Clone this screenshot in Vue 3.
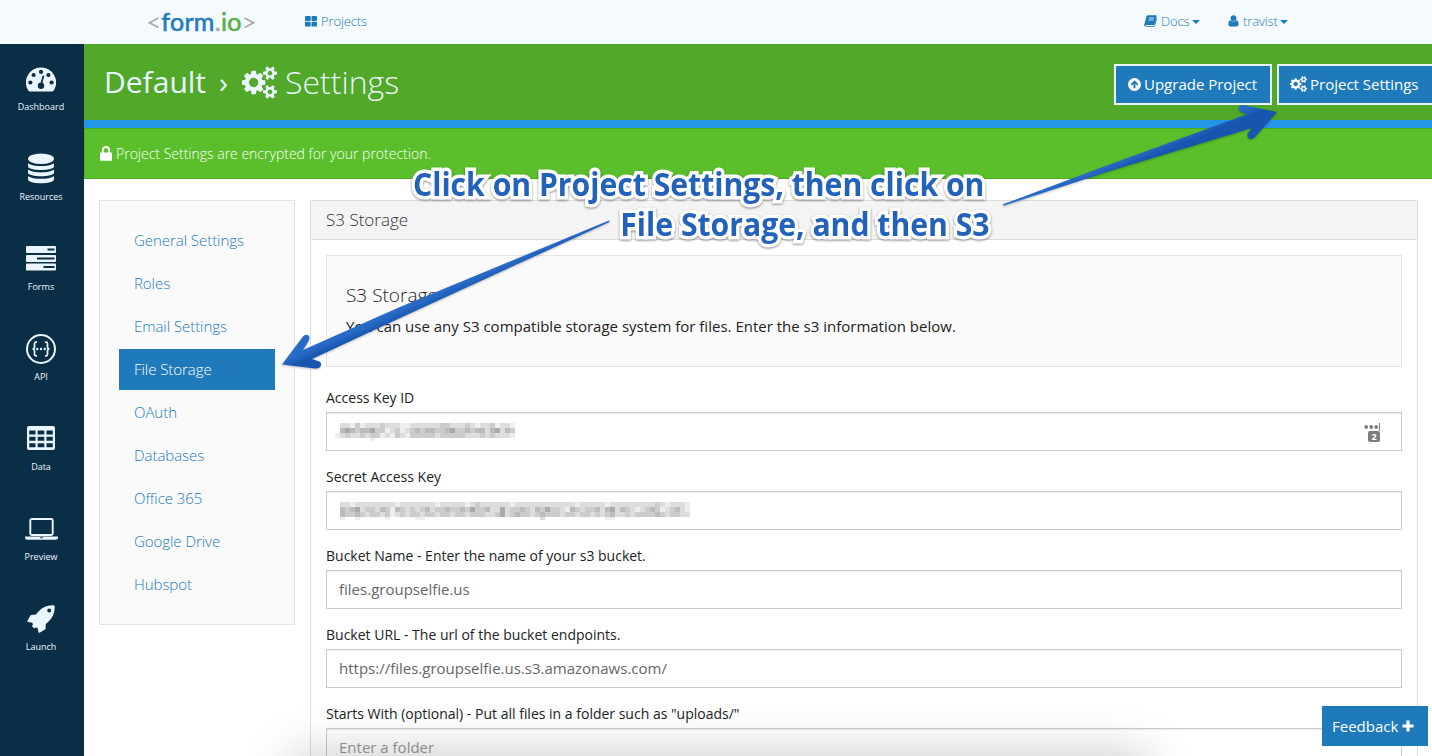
<script setup>
const sideItems = ['Dashboard', 'Resources', 'Forms', 'API', 'Data', 'Preview', 'Launch']
const menu = ['General Settings', 'Roles', 'Email Settings', 'File Storage', 'OAuth', 'Databases', 'Office 365', 'Google Drive', 'Hubspot']

const cogs = 'M896 896q0-106-75-181t-181-75-181 75-75 181 75 181 181 75 181-75 75-181zm768 512q0-52-38-90t-90-38-90 38-38 90q0 53 37.5 90.5t90.5 37.5 90.5-37.5 37.5-90.5zm0-1024q0-52-38-90t-90-38-90 38-38 90q0 53 37.5 90.5t90.5 37.5 90.5-37.5 37.5-90.5zm-384 421v185q0 10-7 19.5t-16 10.5l-155 24q-11 35-32 76 34 48 90 115 7 11 7 20 0 12-7 19-23 30-82.5 89.5t-78.5 59.5q-11 0-21-7l-115-90q-37 19-77 31-11 108-23 155-7 24-30 24h-186q-11 0-20-7.5t-10-17.5l-23-153q-34-10-75-31l-118 89q-7 7-20 7-11 0-21-8-144-133-144-160 0-9 7-19 10-14 41-53t47-61q-23-44-35-82l-152-24q-10-1-17-9.5t-7-19.5v-185q0-10 7-19.5t16-10.5l155-24q11-35 32-76-34-48-90-115-7-11-7-20 0-12 7-20 22-30 82-89t79-59q11 0 21 7l115 90q34-18 77-32 11-108 23-154 7-24 30-24h186q11 0 20 7.5t10 17.5l23 153q34 10 75 31l118-89q8-7 20-7 11 0 21 8 144 133 144 160 0 8-7 19-12 16-42 54t-45 60q23 48 34 82l152 23q10 2 17 10.5t7 19.5zm640 533v140q0 16-149 31-12 27-30 52 51 113 51 138 0 4-4 7-122 71-124 71-8 0-46-47t-52-68q-20 2-30 2t-30-2q-14 21-52 68t-46 47q-2 0-124-71-4-3-4-7 0-25 51-138-18-25-30-52-149-15-149-31v-140q0-16 149-31 13-29 30-52-51-113-51-138 0-4 4-7 4-2 35-20t59-34 30-16q8 0 46 46.5t52 67.5q20-2 30-2t30 2q51-71 92-112l6-2q4 0 124 70 4 3 4 7 0 25-51 138 17 23 30 52 149 15 149 31zm0-1024v140q0 16-149 31-12 27-30 52 51 113 51 138 0 4-4 7-122 71-124 71-8 0-46-47t-52-68q-20 2-30 2t-30-2q-14 21-52 68t-46 47q-2 0-124-71-4-3-4-7 0-25 51-138-18-25-30-52-149-15-149-31v-140q0-16 149-31 13-29 30-52-51-113-51-138 0-4 4-7 4-2 35-20t59-34 30-16q8 0 46 46.5t52 67.5q20-2 30-2t30 2q51-71 92-112l6-2q4 0 124 70 4 3 4 7 0 25-51 138 17 23 30 52 149 15 149 31z'

// Each hex digit is the gray level of one 5px mosaic cell.
const maskedId = [
  'fddecedddcdddeeddddddccdddcdeddcedde',
  'fbabcbbaccedcedcbcbbccbaccbcbbdbadbc',
  'edcddcdccedecdecccccdcccccdddcdcddde',
  'fffffffeffffffffffffffffffffffffffff',
]
const maskedSecret = [
  'fddeddddddddedddddddedddddedcddddddeddddddddddddedddddedddddddddcdeddde',
  'fbcbadccdbcebcdcdcbdccbccbcaccbddadccbcdbcaccdebcdccbdbadbcdedcbcedcbde',
  'fbccbcdccdcedcdccdccdccdccdcccddcadcbccdcbcccdccdccdcdcbddcdccccbcdccdd',
  'feffefffffefffffeefffffffffffffffffffffffdffffffffffffeeffffffffffffffff',
]
const cells = rows => rows.flatMap((r, y) => [...r].map((c, x) => ({ x: x * 5, y: y * 5, c: '#' + c + c + c })).filter(v => v.c !== '#fff'))

const fields = [
  { label: 'Access Key ID', mask: cells(maskedId), manager: true },
  { label: 'Secret Access Key', mask: cells(maskedSecret) },
  { label: 'Bucket Name - Enter the name of your s3 bucket.', value: 'files.groupselfie.us' },
  { label: 'Bucket URL - The url of the bucket endpoints.', value: 'https://files.groupselfie.us.s3.amazonaws.com/' },
  { label: 'Starts With (optional) - Put all files in a folder such as "uploads/"', value: 'Enter a folder', hint: true },
]
</script>

<template>
  <div class="page">
    <header class="topbar">
      <div class="logo">
        <svg width="11" height="12" viewBox="0 0 11 12"><path d="M10.500 1 1.500 5.700 10.500 10.500" /></svg>
        <span class="word"><span class="form">form</span><span class="dot">.</span><span class="io">io</span></span>
        <svg width="11" height="12" viewBox="0 0 11 12"><path d="M.5 1 9.500 5.700 .5 10.500" /></svg>
      </div>
      <a class="nav projects">
        <svg width="12" height="11" viewBox="0 0 12 11"><path fill="currentColor" d="M1 0h4q.7 0 .7.8v3.400q0 .8-.7.8H1q-1 0-1-.8V.8Q0 0 1 0Zm6.400 0H11q1 0 1 .8v3.400q0 .8-1 .8H7.400q-.9 0-.9-.8V.8q0-.8.9-.8ZM1 5.800h4q.7 0 .7.8v3.100q0 .9-.7.9H1q-1 0-1-.9V6.600q0-.8 1-.8Zm6.400 0H11q1 0 1 .8v3.100q0 .9-1 .9H7.400q-.9 0-.9-.9V6.600q0-.8.9-.8Z" /></svg>
        <span>Projects</span>
      </a>
      <a class="nav docs">
        <svg width="13" height="12" viewBox="0 0 13 12"><path fill="currentColor" d="M4 .3h7.600c.7 0 1.200.5 1 1.200L10.400 9c-.2.7-.8 1.100-1.500 1.100H2.200c-.5 0-.8.2-.7.5.1.3.4.3.9.3h6.700c.5 0 .8-.2 1-.7L12.300 3c.6.3.8.8.6 1.400l-2 6c-.3.9-1 1.400-1.800 1.400H2C.8 11.800 0 10.900.2 9.700L2.500 1.500C2.700.7 3.200.3 4 .3Z" /><path d="M5 3h5M4.500 5h5" stroke="#d5eaf7" stroke-width=".9" /></svg>
        <span>Docs</span><i class="caret"></i>
      </a>
      <a class="nav user">
        <svg width="11" height="12" viewBox="0 0 11 12"><circle cx="5.500" cy="3.200" r="2.900" fill="currentColor" /><path fill="currentColor" d="M2.500 5.200C.9 5.700.4 7.200.4 9.200c0 1.500.9 2.200 2.100 2.200h6c1.200 0 2.100-.7 2.100-2.200 0-2-.5-3.500-2.100-4-1.700 1.700-4.300 1.700-6 0Z" /></svg>
        <span>travist</span><i class="caret"></i>
      </a>
    </header>

    <div class="body">
      <aside class="sidebar">
        <a v-for="item in sideItems" :key="item" class="side-item">
          <span class="side-icon" :class="item.toLowerCase()">
            <svg v-if="item === 'Dashboard'" width="30" height="26" viewBox="0 0 30 26"><path fill="currentColor" d="M15 .5a15 15 0 0 0-12.700 23q.5.900 1.500.900h22.400q1 0 1.500-.900A15 15 0 0 0 15 .5Z" /><g fill="#0b2e47"><circle cx="4.400" cy="15.500" r="2.100" /><circle cx="7.600" cy="8" r="2.100" /><circle cx="15" cy="4.900" r="2.100" /><circle cx="22.400" cy="8" r="2.100" /><circle cx="25.600" cy="15.500" r="2.100" /><circle cx="15" cy="18.800" r="3.200" /></g><path d="m15.200 17.500 2.100-8.200" stroke="#0b2e47" stroke-width="1.700" stroke-linecap="round" /></svg>
            <svg v-else-if="item === 'Resources'" width="26" height="31" viewBox="0 0 26 31"><ellipse cx="13" cy="5.800" rx="13" ry="5.300" fill="currentColor" /><g fill="currentColor"><path d="M0 10.200C5 14 21 14 26 10.200v3c0 5-26 5-26 0Z" /><path d="M0 16.600c5 3.800 21 3.800 26 0v3c0 5-26 5-26 0Z" /><path d="M0 23c5 3.800 21 3.800 26 0v3.200c0 5.500-26 5.500-26 0Z" /></g></svg>
            <svg v-else-if="item === 'Forms'" width="30" height="25" viewBox="0 0 30 25"><g fill="currentColor"><rect width="30" height="7" rx="1" /><rect y="9" width="30" height="7" rx="1" /><rect y="17.500" width="30" height="7" rx="1" /></g><g fill="#0b2e47"><rect x="21.500" y="2.500" width="7" height="2" /><rect x="11" y="11.500" width="17.500" height="2" /><rect x="17.500" y="20" width="11" height="2" /></g></svg>
            <svg v-else-if="item === 'API'" class="line" width="30" height="30" viewBox="0 0 30 30"><circle cx="15" cy="15" r="14" stroke-width="2" /><path stroke-width="1.700" d="M11 8.200H10q-1.500 0-1.500 1.500v3q0 2.300-2 2.300 2 0 2 2.300v3q0 1.500 1.500 1.500h1M19 8.200h1q1.500 0 1.500 1.500v3q0 2.300 2 2.300-2 0-2 2.300v3q0 1.500-1.500 1.500h-1" /><g fill="currentColor" stroke="none"><circle cx="11.200" cy="15" r="1.200" /><circle cx="15" cy="15" r="1.200" /><circle cx="18.800" cy="15" r="1.200" /></g></svg>
            <svg v-else-if="item === 'Data'" width="28" height="24" viewBox="0 0 28 24"><path fill="currentColor" fill-rule="evenodd" d="M2 0h24q2 0 2 2v20q0 2-2 2H2q-2 0-2-2V2Q0 0 2 0Zm.200 4.500v4h6.300v-4Zm8.500 0v4h6.600v-4Zm8.800 0v4h6.300v-4ZM2.200 10.800v4h6.300v-4Zm8.500 0v4h6.600v-4Zm8.800 0v4h6.300v-4ZM2.200 17.200v4h6.300v-4Zm8.500 0v4h6.600v-4Zm8.800 0v4h6.300v-4Z" /></svg>
            <svg v-else-if="item === 'Preview'" width="33" height="22" viewBox="0 0 33 22"><rect x="5.300" y="1" width="22.400" height="16" rx="1.500" fill="none" stroke="currentColor" stroke-width="1.900" /><path fill="currentColor" d="M0 18.600h33v1.200q0 2-2.500 2h-28Q0 21.800 0 19.800Z" /><path d="M15 19.700h3" stroke="#0b2e47" stroke-width=".8" /></svg>
            <svg v-else width="28" height="28" viewBox="0 0 28 28"><path fill="currentColor" fill-rule="evenodd" d="M27 .4C19-.2 13.500 3.500 9 9.500L4.200 9.900q-.5.100-.8.500L.3 15.900q-.2.900.7 1l4.400.8.500 2-1 1.300 2.400 2.400 1.300-1 2 .5.900 4.400q.2.900 1 .5l5.500-3.200q.4-.3.500-.8l.3-4.800C24.800 14.500 28 9 27.600 1q0-.5-.6-.6Zm-4.800 3.100a2 2 0 1 1 0 4 2 2 0 0 1 0-4Z" /></svg>
          </span>
          <span class="side-label">{{ item }}</span>
        </a>
      </aside>

      <main class="main">
        <div class="titlebar">
          <h1><span class="project">Default</span><span class="sep">›</span><svg width="35" height="33" viewBox="0 0 1920 1792"><path fill="currentColor" :d="cogs" /></svg><span class="section">Settings</span></h1>
          <div class="actions">
            <a class="btn upgrade"><svg width="13" height="13" viewBox="0 0 13 13"><path fill="currentColor" fill-rule="evenodd" d="M6.500 0a6.500 6.500 0 1 1 0 13 6.500 6.500 0 0 1 0-13Zm0 2.200L2.500 6.200l1.300 1.300L5.500 5.800v4.500h2V5.800l1.700 1.700 1.300-1.300Z" /></svg><span>Upgrade Project</span></a>
            <a class="btn settings"><svg width="17" height="16" viewBox="0 0 1920 1792"><path fill="currentColor" :d="cogs" /></svg><span>Project Settings</span></a>
          </div>
        </div>
        <div class="alert">
          <svg width="12" height="15" viewBox="0 0 12 15"><path d="M2.800 7V4.300a3.200 3.200 0 0 1 6.400 0V7" fill="none" stroke="#fff" stroke-width="2" /><rect y="6.500" width="12" height="8.200" rx=".8" fill="#fff" /></svg>
          <span>Project Settings are encrypted for your protection.</span>
        </div>

        <div class="content">
          <nav class="menu">
            <a v-for="m in menu" :key="m" :class="{ active: m === 'File Storage' }"><span>{{ m }}</span></a>
          </nav>
          <section class="panel">
            <div class="panel-head"><span>S3 Storage</span></div>
            <div class="panel-body">
              <div class="well">
                <h2>S3 Storage</h2>
                <p>You can use any S3 compatible storage system for files. Enter the s3 information below.</p>
              </div>
              <div v-for="f in fields" :key="f.label" class="field">
                <label>{{ f.label }}</label>
                <div class="input" :class="{ hint: f.hint, masked: f.mask }">
                  <svg v-if="f.mask" class="mosaic" width="360" height="20" shape-rendering="crispEdges"><rect v-for="(c, i) in f.mask" :key="i" :x="c.x" :y="c.y" width="5" :height="c.y === 15 ? 3 : 5" :fill="c.c" /></svg>
                  <span v-else>{{ f.value }}</span>
                  <span v-if="f.manager" class="manager">
                    <svg width="17" height="8" viewBox="0 0 17 8"><g fill="#7d7d7d"><circle cx="2.200" cy="4" r="1.900" /><circle cx="7.200" cy="4" r="1.900" /><circle cx="12.200" cy="4" r="1.900" /><rect x="15" width="1" height="8" /></g></svg>
                    <b>2</b>
                  </span>
                </div>
              </div>
            </div>
          </section>
        </div>
      </main>
    </div>

    <div class="dock-shadow"></div>
    <svg class="arrows" width="1432" height="756" viewBox="0 0 1432 756">
      <defs>
        <linearGradient id="g1" gradientUnits="userSpaceOnUse" x1="440" y1="287" x2="447" y2="303"><stop offset=".3" stop-color="#286bc7" /><stop offset=".8" stop-color="#1755ae" /></linearGradient>
        <linearGradient id="g2" gradientUnits="userSpaceOnUse" x1="1140" y1="146" x2="1147" y2="163"><stop offset=".3" stop-color="#286bc7" /><stop offset=".8" stop-color="#1755ae" /></linearGradient>
      </defs>
      <path fill="url(#g1)" d="M282 364.500 303 336.500Q306 333.500 309 336 310 338.500 308 342L303 350 400 307 609 220.500 609.500 222 400 318 312 359 318 361Q321.500 362 321 365 320 369 315 368.500Z" />
      <path fill="url(#g2)" d="M1003 204.300 1100 168 1247 114.300 1241 112Q1237.500 110 1239 107 1240.500 104.500 1244 105.300L1277 112 1255 137Q1252 140 1248.500 138.500 1246.500 136 1248 133L1252 128 1110 171 1003.500 205.700Z" />
    </svg>
    <div class="callout"><span class="line1">Click on Project Settings, then click on</span><span class="line2">File Storage, and then S3</span></div>
    <a class="feedback"><span>Feedback</span><svg width="12" height="12" viewBox="0 0 12 12"><path d="M6 .5v11M.5 6h11" stroke="#fff" stroke-width="3.200" /></svg></a>
  </div>
</template>

<style>
html, body { margin: 0; overflow: hidden; background: #fff; }
</style>

<style scoped>
* { box-sizing: border-box; }
.page { position: relative; width: 1432px; height: 756px; overflow: hidden; font: 400 15px/20px "Open Sans", "Noto Sans", sans-serif; color: #222; background: #fff; }
svg { display: block; flex: none; }
span { white-space: nowrap; }
.topbar { height: 44px; background: #f5faff; display: flex; align-items: center; padding-left: 148px; }
.logo { display: flex; align-items: center; width: 107px; margin-right: 50px; }
.logo svg path { fill: none; stroke: #a9adb0; stroke-width: 1.800; }
.logo svg { position: relative; top: 1px; }
.word { font: 400 25px/30px Lato, sans-serif; width: 85px; display: flex; justify-content: center; letter-spacing: .3px; margin-top: -3px; -webkit-text-stroke: .6px currentColor; }
.form { color: #1f7bbd; } .dot { color: #aaa; } .io { color: #56b146; }
.nav { display: flex; align-items: center; color: #1e7bbb; font-size: 13px; font-weight: 330; letter-spacing: -.12px; padding-bottom: 2px; }
.nav svg { margin-right: 4px; }
.projects { width: 839px; }
.docs { width: 84px; }
.caret { border: 4px solid transparent; border-top-color: #1e7bbb; border-bottom: 0; margin: 2px 0 0 2px; }
.body { display: flex; height: 712px; }
.sidebar { width: 84px; flex: none; background: #0b2e47; color: #eaf6ff; }
.side-item { height: 90px; display: flex; flex-direction: column; align-items: center; padding: 20px 2px 0 0; }
.side-icon { height: 32px; display: flex; align-items: center; }
.side-icon.resources, .side-icon.forms, .side-icon.data { padding-bottom: 4px; }
.side-icon.api, .side-icon.preview, .side-icon.launch { padding-bottom: 2px; }
.side-label { font-size: 9px; line-height: 12px; margin-top: 5px; font-weight: 500; }
.line { fill: none; stroke: currentColor; }
.main { flex: 1; min-width: 0; }
.titlebar { height: 84px; background: #52a828; border-bottom: 8px solid #2496e8; display: flex; justify-content: space-between; padding: 0 0 0 20px; color: #eaf6ff; }
h1 { display: flex; align-items: center; margin: 0; height: 76px; font-size: 30px; font-weight: 400; line-height: 36px; }
.sep { margin: 0 14px 0 13px; width: 9px; }
.section { font-weight: 300; margin-left: 8px; font-size: 32px; }
.actions { display: flex; gap: 5px; padding-top: 20px; margin-right: -2px; }
.btn { height: 41px; border: 2px solid #ebf5fd; background: #1e7abb; color: #fff; display: flex; align-items: center; gap: 3px; font-size: 15px; padding: 0 0 1px 12px; }
.upgrade { width: 158px; }
.settings { width: 157px; padding-left: 11px; }
.alert { height: 51px; background: #5bbf2c; border: 1px solid #4daa22; border-right: 0; display: flex; align-items: center; padding-left: 15px; color: #fff; font-size: 14px; font-weight: 300; gap: 4px; }
.content { display: flex; align-items: flex-start; gap: 15px; padding: 21px 14px 0 15px; }
.menu { width: 196px; height: 425px; background: #fafafa; border: 1px solid #e4e4e4; padding: 19px; display: flex; flex-direction: column; gap: 2px; }
.menu a { height: 41px; display: flex; align-items: center; padding: 0 0 2px 15px; color: #1e7bbb; font-weight: 330; letter-spacing: -.05px; }
.menu a.active { background: #1e7abb; color: #fff; }
.panel { flex: 1; border: 1px solid #ddd; height: 600px; background: #fff; }
.panel-head { height: 39px; background: #f4f4f4; border-bottom: 1px solid #ddd; padding-left: 15px; display: flex; align-items: center; font-size: 17px; font-weight: 300; color: #333; }
.panel-body { padding: 15px; }
.well { height: 112px; border: 1px solid #e4e4e4; background: #fafafa; margin-bottom: 20px; padding: 28px 19px; }
h2 { margin: 0 0 10px; font-size: 19px; line-height: 22px; font-weight: 300; }
.well p { margin: 0; }
.field { margin-bottom: 15px; }
.field label { display: block; height: 20px; margin-bottom: 5px; font-size: 14px; line-height: 21px; }
.input { height: 39px; border: 1px solid #ccc; background: #fff; box-shadow: inset 0 1px 1px rgba(0,0,0,.08); padding: 0 0 2px 12px; display: flex; align-items: center; color: #666; }
.input.hint { color: #999; }
.input.masked { padding-left: 8px; align-items: flex-start; }
.mosaic { margin-top: 10px; }
.manager { margin: 10px 20px 0 auto; display: flex; flex-direction: column; align-items: flex-end; }
.manager b { width: 12px; height: 11px; border-radius: 2px; background: #7d7d7d; color: #fff; font-size: 9px; line-height: 11px; text-align: center; margin-right: 1px; }
.dock-shadow { position: absolute; left: 292px; top: 756px; width: 855px; height: 80px; box-shadow: 0 0 50px rgba(0,0,0,.23); }
.arrows { position: absolute; left: 0; top: 0; filter: drop-shadow(0 1px 1px rgba(0,0,0,.25)); }
.callout { position: absolute; left: 413px; top: 164px; width: 612px; transform: scaleX(.942); transform-origin: 0 0; display: flex; flex-direction: column; font: 700 32px/40px "Open Sans", sans-serif; color: #2362bb; paint-order: stroke fill; -webkit-text-stroke: 7px #fff; stroke-linejoin: round; filter: drop-shadow(0 1px 1px rgba(0,0,0,.45)); }
.line2 { align-self: flex-end; }
.feedback { position: absolute; left: 1322px; top: 706px; width: 106px; height: 40px; background: #1e7abb; color: #fff; display: flex; align-items: center; padding-left: 10px; gap: 4px; }
</style>
